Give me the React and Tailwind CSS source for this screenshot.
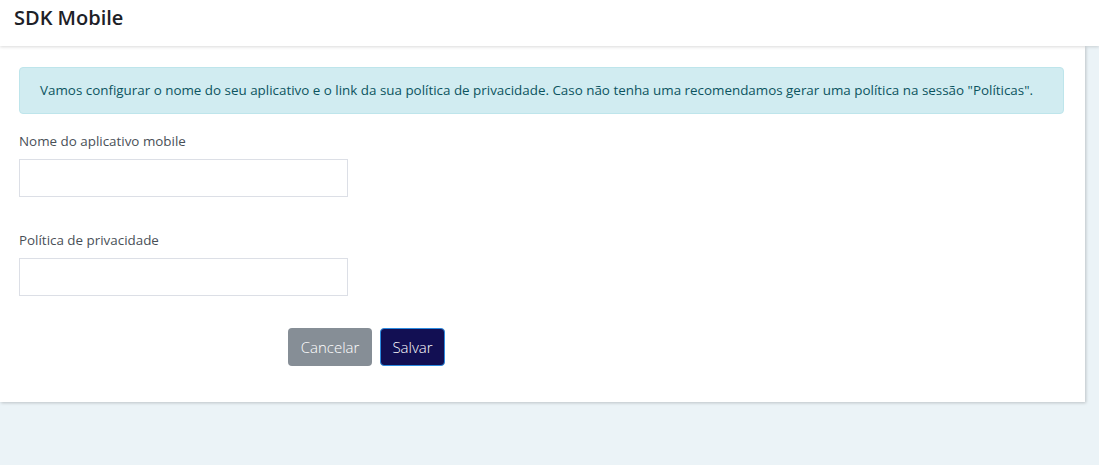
export default function App() {
  return (
    <div className="w-[1099px] h-[465px] bg-[#ebf3f7] overflow-hidden" style={{ fontFamily: '"Open Sans", "Noto Sans", sans-serif' }}>
      <header className="h-[46px] bg-white shadow-[0_1px_3px_rgba(0,0,0,0.15)] relative z-10 flex items-center px-[14px]">
        <h1 className="text-[20px] font-semibold text-[#1d2127] leading-none mt-[-10px]">SDK Mobile</h1>
      </header>
      <main className="w-[1085px] bg-white shadow-[1px_1px_3px_rgba(0,0,0,0.2)] pt-[21px] pb-[36px] pl-[19px] pr-[21px]">
        <div className="h-[47px] bg-[#d1ecf1] border border-[#bee5eb] rounded-[4px] text-[#0c5460] text-[13.4px] flex items-center px-[20px]">
          Vamos configurar o nome do seu aplicativo e o link da sua política de privacidade. Caso não tenha uma recomendamos gerar uma política na sessão "Políticas".
        </div>
        <div className="mt-[18px] flex flex-col">
          <label className="text-[13.4px] text-[#495057] leading-[18px]">Nome do aplicativo mobile</label>
          <input className="mt-[9px] w-[329px] h-[38px] border border-[#dcdfe6] outline-none" />
        </div>
        <div className="mt-[34px] flex flex-col">
          <label className="text-[13.4px] text-[#495057] leading-[18px]">Política de privacidade</label>
          <input className="mt-[9px] w-[329px] h-[38px] border border-[#dcdfe6] outline-none" />
        </div>
        <div className="mt-[32px] flex gap-[8px] pl-[269px]">
          <button className="h-[38px] w-[84px] rounded-[4px] bg-[#868e96] text-white text-[15px] font-light">Cancelar</button>
          <button className="h-[38px] w-[65px] rounded-[4px] bg-[#120f53] border border-[#2c8be0] text-white text-[15px] font-light">Salvar</button>
        </div>
      </main>
    </div>
  );
}
